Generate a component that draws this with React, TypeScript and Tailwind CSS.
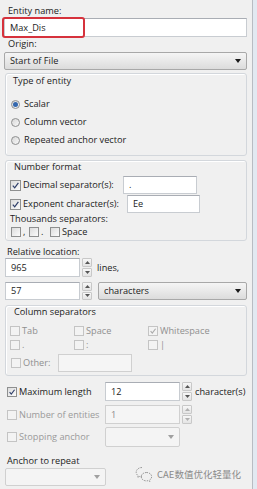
import React from "react"

function Box({ checked = false, disabled = false, size = "w-[10px] h-[10px]" }: { checked?: boolean; disabled?: boolean; size?: string }) {
  return (
    <span
      className={`${size} shrink-0 flex items-center justify-center border ${
        disabled ? "border-[#c4c4c4] bg-[#f3f3f3]" : "border-[#8e8f8f] bg-linear-to-br from-[#dcdcdc] to-[#fbfbfb]"
      }`}
    >
      {checked && (
        <svg viewBox="0 0 10 10" className="w-full h-full">
          <path d="M2 5.2 L4.1 7.6 L8.2 2.2" fill="none" stroke={disabled ? "#aaaaaa" : "#2f3f6a"} strokeWidth="1.4" />
        </svg>
      )}
    </span>
  )
}

function Radio({ checked = false }: { checked?: boolean }) {
  return (
    <span className="w-[9px] h-[9px] shrink-0 rounded-full border border-[#8e8f8f] bg-linear-to-br from-[#d6d6d6] to-[#fafafa] flex items-center justify-center">
      {checked && <span className="w-[5px] h-[5px] rounded-full bg-[#3467ad]" />}
    </span>
  )
}

function Arrow({ disabled = false }: { disabled?: boolean }) {
  return (
    <svg width="6" height="4" viewBox="0 0 6 4" className="ml-auto mr-[5px] shrink-0">
      <path d="M0 0 L6 0 L3 4Z" fill={disabled ? "#a0a0a0" : "#1a1a1a"} />
    </svg>
  )
}

function Combo({ text = "", disabled = false, size }: { text?: string; disabled?: boolean; size: string }) {
  return (
    <div
      className={`${size} flex items-center pl-[5px] border rounded-[2px] ${
        disabled ? "border-[#d0d0d0] bg-[#f4f4f4]" : "border-[#a8a8a8] bg-linear-to-b from-[#f5f5f5] to-[#dcdcdc]"
      }`}
    >
      <span>{text}</span>
      <Arrow disabled={disabled} />
    </div>
  )
}

function Field({ value = "", disabled = false, size }: { value?: string; disabled?: boolean; size: string }) {
  return (
    <div
      className={`${size} shrink-0 flex items-center pl-[5px] border ${
        disabled ? "border-[#d0d0d0] bg-[#f5f5f5] text-[#8c8c8c]" : "border-[#c8ccd1] border-t-[#a9adb4] bg-white"
      }`}
    >
      {value}
    </div>
  )
}

function Spin({ disabled = false }: { disabled?: boolean }) {
  const fill = disabled ? "#b0b0b0" : "#555555"
  return (
    <div className="w-[10px] h-full shrink-0 flex flex-col gap-px">
      <div className="flex-1 border border-[#c8c8c8] rounded-[1px] bg-linear-to-b from-[#f7f7f7] to-[#e4e4e4] flex items-center justify-center">
        <svg width="5" height="3" viewBox="0 0 5 3">
          <path d="M0 3 L2.5 0 L5 3Z" fill={fill} />
        </svg>
      </div>
      <div className="flex-1 border border-[#c8c8c8] rounded-[1px] bg-linear-to-b from-[#f7f7f7] to-[#e4e4e4] flex items-center justify-center">
        <svg width="5" height="3" viewBox="0 0 5 3">
          <path d="M0 0 L5 0 L2.5 3Z" fill={fill} />
        </svg>
      </div>
    </div>
  )
}

function WeChat() {
  return (
    <svg width="18" height="16" viewBox="0 0 18 16" className="shrink-0">
      <path
        d="M7 1.5C3.7 1.5 1.2 3.6 1.2 6.2c0 1.5.8 2.8 2 3.6l-.5 1.7 2-1.1c.7.2 1.5.3 2.3.3"
        fill="none"
        stroke="#9a9a9a"
        strokeWidth="1"
        strokeDasharray="1.5 1"
      />
      <path
        d="M11.5 6.5c-3 0-5.3 1.9-5.3 4.2s2.3 4.2 5.3 4.2c.6 0 1.2-.1 1.8-.3l1.7.9-.4-1.5c1.3-.8 2.1-2 2.1-3.3 0-2.3-2.3-4.2-5.2-4.2z"
        fill="none"
        stroke="#9a9a9a"
        strokeWidth="1"
        strokeDasharray="1.5 1"
      />
    </svg>
  )
}

const group = "ml-px border border-[#d3d7dc] rounded-[3px] shadow-[inset_1px_1px_0_#ffffff]"

export default function App() {
  return (
    <div className="flex w-[257px] h-[489px] overflow-hidden bg-[#f0f0f0] font-['Open_Sans',sans-serif] text-[9.2px] text-[#1c1c1c]">
      <div className="w-[252px] shrink-0 pl-[4px] pr-[5px] pt-[4px] flex flex-col">
        <div className="h-[14px] leading-[14px] pl-[4px]">Entity name:</div>
        <div className="relative">
          <Field value="Max_Dis" size="w-full h-[19px]" />
          <div className="absolute -left-[2px] -top-px w-[83px] h-[21px] border-2 border-[#d6323c] rounded-[3px]" />
        </div>

        <div className="h-[13px] leading-[13px] pl-[4px]">Origin:</div>
        <div className="mt-[2px]">
          <Combo text="Start of File" size="w-full h-[18px]" />
        </div>

        {/* Type of entity */}
        <div className={`${group} mt-[3px] pt-px pb-[6px]`}>
          <div className="h-[12px] leading-[12px] pl-[7px]">Type of entity</div>
          <div className="mt-[8px] pl-[5px] flex flex-col">
            <div className="h-[18px] flex items-center gap-[4px]">
              <Radio checked />
              <span>Scalar</span>
            </div>
            <div className="h-[18px] flex items-center gap-[4px]">
              <Radio />
              <span>Column vector</span>
            </div>
            <div className="h-[18px] flex items-center gap-[4px]">
              <Radio />
              <span>Repeated anchor vector</span>
            </div>
          </div>
        </div>

        {/* Number format */}
        <div className={`${group} mt-[4px] pb-[2px]`}>
          <div className="h-[12px] leading-[12px] pl-[8px]">Number format</div>
          <div className="mt-[3px] h-[18px] pl-[4px] flex items-center">
            <Box checked size="w-[11px] h-[11px]" />
            <span className="ml-[2px] w-[100px]">Decimal separator(s):</span>
            <Field value="." size="w-[74px] h-[18px]" />
          </div>
          <div className="mt-px h-[18px] pl-[4px] flex items-center">
            <Box checked size="w-[11px] h-[11px]" />
            <span className="ml-[2px] w-[104px]">Exponent character(s):</span>
            <Field value="Ee" size="w-[73px] h-[18px]" />
          </div>
          <div className="h-[12px] leading-[12px] pl-[4px]">Thousands separators:</div>
          <div className="mt-px h-[12px] pl-[5px] flex items-center">
            <div className="w-[18px] flex items-center gap-[2px]">
              <Box />
              <span>,</span>
            </div>
            <div className="w-[21px] flex items-center gap-[2px]">
              <Box />
              <span>.</span>
            </div>
            <div className="flex items-center gap-[2px]">
              <Box />
              <span>Space</span>
            </div>
          </div>
        </div>

        <div className="mt-[5px] h-[12px] leading-[12px] pl-[3px]">Relative location:</div>
        <div className="h-[19px] pl-px flex items-center gap-[2px]">
          <Field value="965" size="w-[75px] h-[19px]" />
          <Spin />
          <span className="ml-[3px]">lines,</span>
        </div>
        <div className="mt-[5px] h-[18px] pl-px flex items-center gap-[2px]">
          <Field value="57" size="w-[75px] h-[18px]" />
          <Spin />
          <div className="ml-[4px] flex-1">
            <Combo text="characters" size="w-full h-[18px]" />
          </div>
        </div>

        {/* Column separators */}
        <div className={`${group} mt-[5px] pb-[3px] text-[#8f8f8f]`}>
          <div className="h-[12px] leading-[12px] pl-[8px] text-[#1c1c1c]">Column separators</div>
          <div className="mt-[6px] pl-[4px] grid grid-cols-[64px_74px_1fr]">
            <div className="h-[14px] flex items-center gap-[2px]">
              <Box disabled />
              <span>Tab</span>
            </div>
            <div className="h-[14px] flex items-center gap-[2px]">
              <Box disabled />
              <span>Space</span>
            </div>
            <div className="h-[14px] flex items-center gap-[2px]">
              <Box checked disabled />
              <span>Whitespace</span>
            </div>
            <div className="h-[13px] flex items-center gap-[2px]">
              <Box disabled />
              <span>.</span>
            </div>
            <div className="h-[13px] flex items-center gap-[2px]">
              <Box disabled />
              <span>:</span>
            </div>
            <div className="h-[13px] flex items-center gap-[2px]">
              <Box disabled />
              <span>|</span>
            </div>
          </div>
          <div className="mt-[3px] h-[18px] pl-[5px] flex items-center">
            <Box disabled />
            <span className="ml-[2px] w-[35px]">Other:</span>
            <Field disabled size="w-[74px] h-[18px]" />
          </div>
        </div>

        <div className="mt-[6px] h-[19px] pl-[3px] flex items-center">
          <Box checked />
          <span className="ml-[2px] w-[86px]">Maximum length</span>
          <Field value="12" size="w-[75px] h-[19px]" />
          <div className="ml-[2px] h-full">
            <Spin />
          </div>
          <span className="ml-[3px] whitespace-nowrap">character(s)</span>
        </div>
        <div className="mt-[4px] h-[19px] pl-[3px] flex items-center text-[#9a9a9a]">
          <Box disabled />
          <span className="ml-[2px] w-[86px]">Number of entities</span>
          <Field value="1" disabled size="w-[75px] h-[19px]" />
          <div className="ml-[2px] h-full">
            <Spin disabled />
          </div>
        </div>
        <div className="mt-[3px] h-[20px] pl-[3px] flex items-center text-[#9a9a9a]">
          <Box disabled />
          <span className="ml-[2px] w-[86px]">Stopping anchor</span>
          <Combo disabled size="w-[75px] h-[20px]" />
        </div>

        <div className="mt-[8px] h-[12px] leading-[12px] pl-[3px]">Anchor to repeat</div>
        <div className="mt-px h-[18px] pl-px flex items-center">
          <Combo disabled size="w-[101px] h-[18px]" />
          <div className="ml-[29px] -mt-[6px] shrink-0 whitespace-nowrap flex items-center gap-[4px] text-[#8a8a8a] font-['Noto_Sans_CJK_SC',sans-serif] text-[9.5px]">
            <WeChat />
            <span>CAE数值优化轻量化</span>
          </div>
        </div>
      </div>
      <div className="flex-1 border-l border-[#b8bcc2] bg-[#e2e9f1]" />
    </div>
  )
}
